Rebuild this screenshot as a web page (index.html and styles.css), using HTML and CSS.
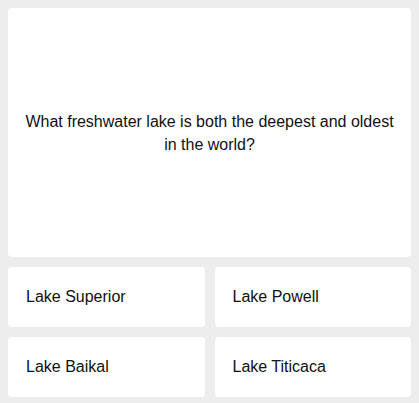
FILE: index.html
```html
<!DOCTYPE html>
<html>
<head>
<meta charset="utf-8">
<link rel="stylesheet" href="styles.css">
</head>
<body>
<div class="quiz">
  <div class="question">
    <p>What freshwater lake is both the deepest and oldest in the world?</p>
  </div>
  <div class="answers">
    <div class="answer">Lake Superior</div>
    <div class="answer">Lake Powell</div>
    <div class="answer">Lake Baikal</div>
    <div class="answer">Lake Titicaca</div>
  </div>
</div>
</body>
</html>
```
FILE: styles.css
```css
html, body {
  margin: 0;
  padding: 0;
  background: #ededed;
}
body {
  font-family: "Liberation Sans", Arial, sans-serif;
  color: #111;
}
.quiz {
  padding: 8px 8px 6px 8px;
  display: flex;
  flex-direction: column;
  gap: 10px;
}
.question {
  background: #fff;
  border-radius: 4px;
  height: 249px;
  display: flex;
  align-items: center;
  justify-content: center;
  padding: 0 16px;
  box-sizing: border-box;
}
.question p {
  margin: 0;
  font-size: 16px;
  line-height: 23px;
  text-align: center;
}
.answers {
  display: grid;
  grid-template-columns: 1fr 1fr;
  gap: 10px;
}
.answer {
  background: #fff;
  border-radius: 4px;
  height: 60px;
  display: flex;
  align-items: center;
  padding-left: 18px;
  font-size: 16px;
}
```
